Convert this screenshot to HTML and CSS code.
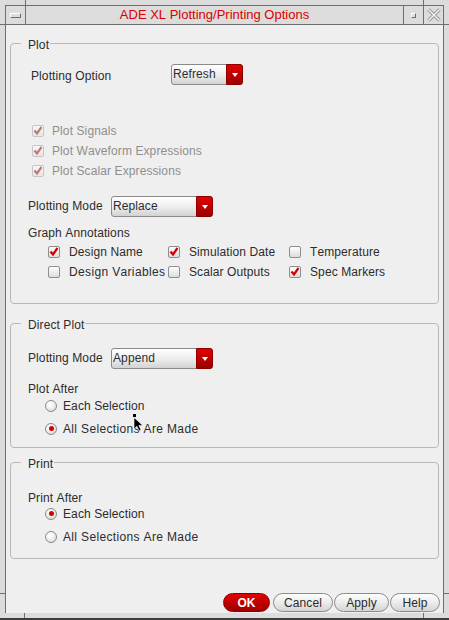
FILE: index.html
```html
<!DOCTYPE html>
<html>
<head>
<meta charset="utf-8">
<title>ADE XL Plotting/Printing Options</title>
<link rel="stylesheet" href="styles.css">
</head>
<body>
<div class="window">
  <div class="strip top"><span class="vtick tl"></span><span class="vtick tr"></span></div>
  <div class="mid">
    <div class="gutter"><span class="htick a"></span><span class="htick b"></span></div>
    <div class="main">
      <div class="titlebar">
        <div class="tb-btn menu"><span class="bevel bar"></span></div>
        <div class="title">ADE XL Plotting/Printing Options</div>
        <div class="tb-btn min"><span class="bevel sq"></span></div>
        <div class="tb-btn close">
          <svg width="14" height="14" viewBox="0 0 14 14"><path d="M1.5 1.5 L12.5 12.5 M12.5 1.5 L1.5 12.5" stroke="#9a9a9a" stroke-width="3.4" fill="none"/><path d="M1.5 1.5 L12.5 12.5 M12.5 1.5 L1.5 12.5" stroke="#f2f2f2" stroke-width="1.4" fill="none"/></svg>
        </div>
      </div>
      <div class="content">
        <fieldset class="group g-plot">
          <legend>Plot</legend>
          <div class="row r-option">
            <span class="lbl lbl-option">Plotting Option</span>
            <div class="combo w-short"><span class="combo-text">Refresh</span><span class="combo-arrow"></span></div>
          </div>
          <div class="dis-list">
            <div class="check disabled"><span class="box"><svg width="10" height="10" viewBox="0 0 10 10"><polyline points="1.5,4.5 4,7.5 8.5,1" fill="none" stroke-width="2.2"/></svg></span>Plot Signals</div>
            <div class="check disabled"><span class="box"><svg width="10" height="10" viewBox="0 0 10 10"><polyline points="1.5,4.5 4,7.5 8.5,1" fill="none" stroke-width="2.2"/></svg></span>Plot Waveform Expressions</div>
            <div class="check disabled"><span class="box"><svg width="10" height="10" viewBox="0 0 10 10"><polyline points="1.5,4.5 4,7.5 8.5,1" fill="none" stroke-width="2.2"/></svg></span>Plot Scalar Expressions</div>
          </div>
          <div class="row r-mode m-plot">
            <span class="lbl lbl-mode">Plotting Mode</span>
            <div class="combo w-long"><span class="combo-text">Replace</span><span class="combo-arrow"></span></div>
          </div>
          <div class="sublabel annot-label">Graph Annotations</div>
          <div class="annot-grid">
            <div class="check"><span class="box"><svg width="10" height="10" viewBox="0 0 10 10"><polyline points="1.5,4.5 4,7.5 8.5,1" fill="none" stroke-width="2.2"/></svg></span>Design Name</div>
            <div class="check"><span class="box"><svg width="10" height="10" viewBox="0 0 10 10"><polyline points="1.5,4.5 4,7.5 8.5,1" fill="none" stroke-width="2.2"/></svg></span>Simulation Date</div>
            <div class="check"><span class="box"></span>Temperature</div>
            <div class="check"><span class="box"></span><span class="wide">Design Variables</span></div>
            <div class="check"><span class="box"></span>Scalar Outputs</div>
            <div class="check"><span class="box"><svg width="10" height="10" viewBox="0 0 10 10"><polyline points="1.5,4.5 4,7.5 8.5,1" fill="none" stroke-width="2.2"/></svg></span>Spec Markers</div>
          </div>
        </fieldset>

        <fieldset class="group g-direct">
          <legend>Direct Plot</legend>
          <div class="row r-mode m-direct">
            <span class="lbl lbl-mode">Plotting Mode</span>
            <div class="combo w-long"><span class="combo-text">Append</span><span class="combo-arrow"></span></div>
          </div>
          <div class="sublabel tight after-direct">Plot After</div>
          <div class="radio-row"><span class="radio"></span>Each Selection</div>
          <div class="radio-row"><span class="radio on"></span><span class="wide">All Selections Are Made</span></div>
        </fieldset>

        <fieldset class="group g-print">
          <legend>Print</legend>
          <div class="sublabel tight after-print">Print After</div>
          <div class="radio-row"><span class="radio on"></span>Each Selection</div>
          <div class="radio-row"><span class="radio"></span><span class="wide">All Selections Are Made</span></div>
        </fieldset>

        <div class="buttons">
          <button class="btn ok">OK</button>
          <button class="btn w-cancel">Cancel</button>
          <button class="btn w-apply">Apply</button>
          <button class="btn w-help">Help</button>
        </div>
      </div>
    </div>
    <div class="gutter"><span class="htick a"></span><span class="htick b"></span></div>
  </div>
  <div class="strip bottom"><span class="vtick bl"></span><span class="vtick br"></span></div>
  <div class="bottomline"></div>
  <svg class="cursor" width="14" height="20" viewBox="0 0 14 20"><rect x="1" y="1" width="3" height="3" fill="#000"/><path d="M2 4.5 L2 16 L4.8 13.2 L7 17.8 L9 16.9 L6.9 12.4 L10.8 12.4 Z" fill="#000" stroke="#fff" stroke-width="0.6"/></svg>
</div>
</body>
</html>
```

FILE: styles.css
```css
* { box-sizing: border-box; }
html, body { margin: 0; padding: 0; }
body {
  width: 449px;
  height: 620px;
  overflow: hidden;
  font-family: "Liberation Sans", Arial, sans-serif;
  font-size: 12px;
  letter-spacing: 0.1px;
  font-kerning: none;
  color: #2c2c2c;
}
.window {
  position: relative;
  width: 449px;
  height: 620px;
  background: #dcdcdc;
  display: flex;
  flex-direction: column;
}
.strip { display: flex; height: 5px; flex: none; }
.vtick { width: 1px; background: #6e6e6e; }
.strip.top .tl { margin-left: 25px; }
.strip.top .tr { margin-left: auto; margin-right: 25px; }
.strip.bottom .bl { margin-left: 24px; }
.strip.bottom .br { margin-left: auto; margin-right: 25px; }
.mid { display: flex; height: 608px; flex: none; }
.gutter { width: 5px; display: flex; flex-direction: column; }
.htick { height: 1px; background: #6e6e6e; }
.htick.a { margin-top: 19px; }
.htick.b { margin-top: auto; margin-bottom: 19px; }
.main {
  flex: 1;
  border: 1px solid #6e6e6e;
  border-bottom: none;
  display: flex;
  flex-direction: column;
}
.bottomline { height: 2px; background: #3c3c3c; flex: none; }

/* title bar */
.titlebar {
  height: 19px;
  border-bottom: 1px solid #6e6e6e;
  display: flex;
  flex: none;
}
.tb-btn { display: flex; align-items: center; justify-content: center; }
.tb-btn.menu { width: 20px; border-right: 1px solid #6e6e6e; }
.tb-btn.min { width: 21px; border-left: 1px solid #6e6e6e; border-right: 1px solid #6e6e6e; }
.tb-btn.close { width: 19px; }
.bevel {
  display: block;
  border-top: 1px solid #ffffff;
  border-left: 1px solid #ffffff;
  border-bottom: 1px solid #6e6e6e;
  border-right: 1px solid #6e6e6e;
}
.bevel.bar { width: 11px; height: 5px; }
.bevel.sq { width: 5px; height: 5px; }
.title {
  flex: 1;
  text-align: center;
  color: #d80000;
  font-size: 13px;
  line-height: 18px;
  letter-spacing: 0;
}

/* content */
.content {
  flex: 1;
  background: #efefef;
  display: flex;
  flex-direction: column;
}
.group {
  margin: 0 4px;
  padding: 0;
  border: 1px solid #b9b9b9;
  border-radius: 4px;
  min-width: 0;
}
.group legend {
  margin-left: 10px;
  padding: 4px 1px 0 7px;
  line-height: 14px;
  font-size: 12px;
}
.g-plot { margin-top: 9px; padding-bottom: 21px; }
.g-direct { margin-top: 10px; padding-bottom: 7px; }
.g-print { margin-top: 5px; padding-bottom: 10px; }

.row { display: flex; align-items: flex-start; }
.lbl { line-height: 21px; }
.r-option { margin-top: 12px; padding-left: 20px; }
.lbl-option { width: 140px; padding-top: 2px; }
.r-mode { padding-left: 17px; }
.lbl-mode { width: 83px; }
.m-plot { margin-top: 15px; }
.m-direct { margin-top: 16px; }

.combo {
  display: flex;
  height: 21px;
  border: 1px solid #8a8a8a;
  border-radius: 3px;
  background: linear-gradient(#ffffff, #ececec 55%, #d2d2d2);
}
.w-short { width: 72px; }
.w-long { width: 102px; }
.combo-text { flex: 1; line-height: 18px; padding-left: 1px; }
.combo-arrow {
  width: 17px;
  margin: -1px -1px -1px 0;
  border-radius: 0 3px 3px 0;
  background: linear-gradient(#e40000, #b80000 60%, #9a0000);
  border: 1px solid #8c0000;
  display: flex;
  align-items: center;
  justify-content: center;
}
.combo-arrow::after {
  content: "";
  border-left: 3.5px solid transparent;
  border-right: 3.5px solid transparent;
  border-top: 4px solid #ffffff;
}

/* checkboxes */
.dis-list { margin-top: 34px; padding-left: 21px; }
.check { display: flex; align-items: center; height: 20px; line-height: 20px; white-space: nowrap; }
.box {
  width: 12px;
  height: 12px;
  flex: none;
  border: 1px solid #8e8e8e;
  border-radius: 2px;
  background: linear-gradient(#fefefe, #dcdcdc);
  margin-right: 9px;
  display: flex;
  align-items: center;
  justify-content: center;
}
.box svg polyline { stroke: #d40000; }
.check.disabled { color: #8e8e8e; }
.check.disabled .box {
  border-color: #c6c6c6;
  background: linear-gradient(#f7f7f7, #e6e6e6);
  margin-right: 8px;
}
.check.disabled .box svg polyline { stroke: #c07878; }
.wide { letter-spacing: 0.35px; }

.sublabel { line-height: 14px; padding-left: 17px; }
.sublabel.tight { line-height: 12px; }
.annot-label { margin-top: 9px; }
.after-direct { margin-top: 14px; margin-bottom: -1px; }
.after-print { margin-top: 21px; margin-bottom: -2px; }
.annot-grid {
  margin-top: 2px;
  padding-left: 37px;
  display: grid;
  grid-template-columns: 120px 121px auto;
}

/* radios */
.radio-row {
  display: flex;
  align-items: center;
  height: 23px;
  padding-left: 34px;
  white-space: nowrap;
}
.radio {
  width: 12px;
  height: 12px;
  flex: none;
  border-radius: 50%;
  border: 1px solid #8a8a8a;
  background: radial-gradient(circle at 40% 35%, #ffffff, #f2f2f2 40%, #cfcfcf);
  margin-right: 6px;
  display: flex;
  align-items: center;
  justify-content: center;
}
.radio.on::after {
  content: "";
  width: 5px;
  height: 5px;
  border-radius: 50%;
  background: #d40000;
}

/* buttons */
.buttons {
  margin-top: auto;
  margin-bottom: 1px;
  margin-right: 3px;
  display: flex;
  justify-content: flex-end;
}
.btn {
  height: 19px;
  padding: 0;
  margin-right: 1px;
  border: 1px solid #8c8c8c;
  border-radius: 10px;
  background: linear-gradient(#fdfdfd, #ececec 50%, #d4d4d4);
  font-family: "Liberation Sans", Arial, sans-serif;
  font-size: 12px;
  letter-spacing: 0.1px;
  line-height: 16px;
  color: #2a2a2a;
}
.btn.ok {
  width: 47px;
  margin-right: 3px;
  border-color: #8a0000;
  background: linear-gradient(#e60000, #c00000 50%, #a00000);
  color: #ffffff;
  font-weight: bold;
}
.w-cancel { width: 60px; }
.w-apply { width: 55px; }
.w-help { width: 50px; margin-right: 0; }

.cursor { position: absolute; left: 132px; top: 413px; }
```
